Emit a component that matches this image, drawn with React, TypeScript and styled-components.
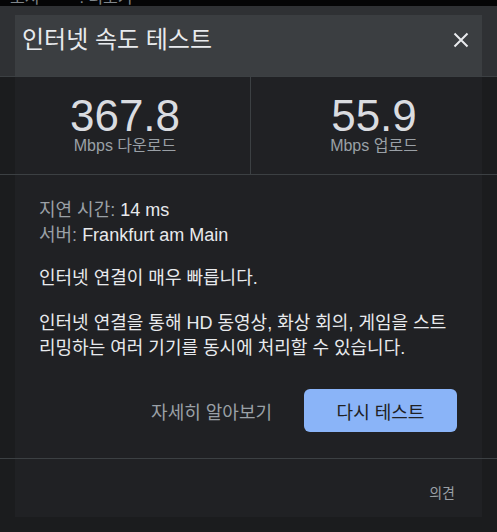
import React from 'react'
import styled, { createGlobalStyle } from 'styled-components'

const GlobalStyle = createGlobalStyle`
  html, body {
    margin: 0;
    padding: 0;
    background: #1b1c1e;
  }
`

const OUTER = '#1b1c1e'
const PANEL = '#202124'
const LINE = '#3c4043'

// the dialog panel is inset 15px from the page edges; bands reach full width
const panelBand = `
  background: linear-gradient(
    90deg,
    ${OUTER} 15px,
    ${PANEL} 15px,
    ${PANEL} 482px,
    ${OUTER} 482px
  );
`

const Root = styled.div`
  width: 497px;
  height: 532px;
  display: flex;
  flex-direction: column;
  overflow: hidden;
  background: ${OUTER};
  font-family: 'Liberation Sans', Arial, 'Noto Sans CJK KR', sans-serif;
  color: #e8eaed;
`

const TopStrip = styled.div`
  height: 6px;
  flex-shrink: 0;
  overflow: hidden;
  background: #050506;
  display: flex;
  gap: 40px;
  padding-left: 10px;
  font-size: 16px;
  line-height: 16px;
  color: #80868b;

  span {
    margin-top: -10px;
  }
`

const HeaderBand = styled.div`
  height: 70px;
  flex-shrink: 0;
  box-sizing: border-box;
  padding: 9px 15px 0;
  background: #2f3134;
`

const Header = styled.div`
  height: 100%;
  display: flex;
  align-items: flex-start;
  justify-content: space-between;
  box-sizing: border-box;
  padding: 9px 9px 0 7px;
  background: #3b3e41;
`

const Title = styled.h1`
  margin: 0;
  font-size: 24px;
  line-height: 32px;
  font-weight: 400;
  color: #e8eaed;
`

const CloseButton = styled.button`
  width: 24px;
  height: 24px;
  margin-top: 4px;
  padding: 0;
  border: none;
  background: none;
  display: flex;
  align-items: center;
  justify-content: center;
  cursor: pointer;
`

const Stats = styled.div`
  height: 97px;
  flex-shrink: 0;
  display: grid;
  grid-template-columns: 250px 1fr;
  border-top: 1px solid ${LINE};
  border-bottom: 1px solid ${LINE};
  ${panelBand}
`

const Stat = styled.div<{ $divided?: boolean }>`
  display: flex;
  flex-direction: column;
  align-items: center;
  padding-top: 20px;
  ${(p) => p.$divided && `border-left: 1px solid ${LINE};`}
`

const Speed = styled.div`
  font-size: 44px;
  line-height: 38px;
  color: #dadce0;
`

const Unit = styled.div`
  margin-top: 2px;
  font-size: 16px;
  line-height: 18px;
  color: #9aa0a6;
`

const Info = styled.div`
  flex: 1;
  display: flex;
  flex-direction: column;
  padding: 23px 40px 0 39px;
  border-bottom: 1px solid ${LINE};
  ${panelBand}
`

const Row = styled.div`
  font-size: 18px;
  line-height: 25px;
  color: #e8eaed;
`

const Label = styled.span`
  color: #9aa0a6;
`

const Message = styled.p`
  margin: 0;
  font-size: 18px;
  line-height: 25px;
  color: #e8eaed;

  & + & {
    margin-top: 20px;
  }
`

const Details = styled.div`
  margin-top: 18px;
  display: flex;
  flex-direction: column;
`

const Actions = styled.div`
  display: flex;
  justify-content: flex-end;
  align-items: center;
  gap: 32px;
  margin-top: 28px;
`

const LinkButton = styled.button`
  padding: 0;
  border: none;
  background: none;
  font: inherit;
  font-size: 18px;
  color: #9aa0a6;
  cursor: pointer;
`

const PrimaryButton = styled.button`
  width: 153px;
  height: 43px;
  border: none;
  border-radius: 6px;
  background: #8ab4f8;
  font: inherit;
  font-size: 18px;
  color: #202124;
  cursor: pointer;
`

const Footer = styled.div`
  height: 58px;
  flex-shrink: 0;
  display: flex;
  justify-content: flex-end;
  align-items: flex-start;
  box-sizing: border-box;
  padding: 24px 42px 0 0;
  ${panelBand}
`

const Feedback = styled.span`
  font-size: 14px;
  line-height: 20px;
  color: #9aa0a6;
`

const Bottom = styled.div`
  height: 15px;
  flex-shrink: 0;
`

const CloseIcon = () => (
  <svg width="16" height="16" viewBox="0 0 16 16">
    <path
      d="M1.5 1.5 L14.5 14.5 M14.5 1.5 L1.5 14.5"
      stroke="#e8eaed"
      strokeWidth="2"
      fill="none"
    />
  </svg>
)

export default function App() {
  return (
    <>
      <GlobalStyle />
      <Root>
        <TopStrip>
          <span>도서</span>
          <span>: 더보기</span>
        </TopStrip>

        <HeaderBand>
          <Header>
            <Title>인터넷 속도 테스트</Title>
            <CloseButton aria-label="닫기">
              <CloseIcon />
            </CloseButton>
          </Header>
        </HeaderBand>

        <Stats>
          <Stat>
            <Speed>367.8</Speed>
            <Unit>Mbps 다운로드</Unit>
          </Stat>
          <Stat $divided>
            <Speed>55.9</Speed>
            <Unit>Mbps 업로드</Unit>
          </Stat>
        </Stats>

        <Info>
          <Row>
            <Label>지연 시간:</Label> 14 ms
          </Row>
          <Row>
            <Label>서버:</Label> Frankfurt am Main
          </Row>

          <Details>
            <Message>인터넷 연결이 매우 빠릅니다.</Message>
            <Message>
              인터넷 연결을 통해 HD 동영상, 화상 회의, 게임을 스트리밍하는 여러
              기기를 동시에 처리할 수 있습니다.
            </Message>
          </Details>

          <Actions>
            <LinkButton>자세히 알아보기</LinkButton>
            <PrimaryButton>다시 테스트</PrimaryButton>
          </Actions>
        </Info>

        <Footer>
          <Feedback>의견</Feedback>
        </Footer>
        <Bottom />
      </Root>
    </>
  )
}
